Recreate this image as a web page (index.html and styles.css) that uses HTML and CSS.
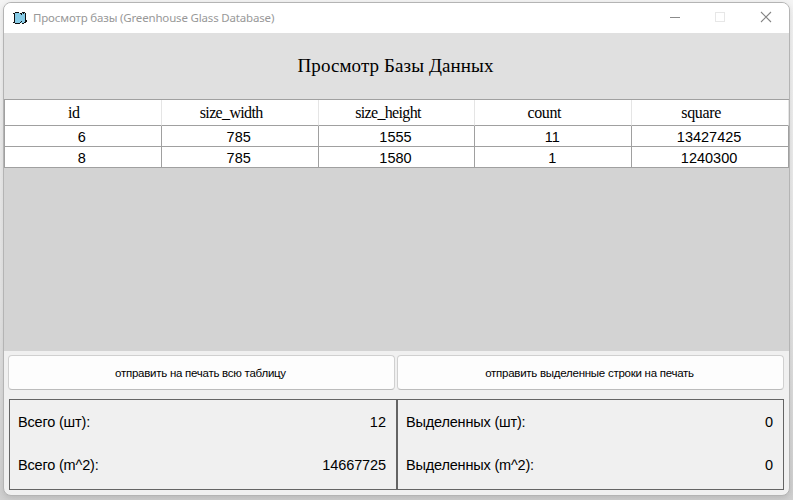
FILE: index.html
```html
<!DOCTYPE html>
<html lang="ru">
<head>
<meta charset="utf-8">
<title>Просмотр базы (Greenhouse Glass Database)</title>
<link rel="stylesheet" href="styles.css">
</head>
<body>
<div class="window">
  <header class="titlebar">
    <svg class="app-icon" width="14" height="14" viewBox="0 0 14 14" shape-rendering="crispEdges">
      <path fill="#86cbe6" d="M2 2h10v10H2z"/>
      <path fill="#111" d="M0 2h2v1H0zM1 3h1v8H1zM0 11h2v1H0zM2 1h4v1H2zM7 2h2v1H7zM9 1h3v1H9zM12 2h1v7h-1zM12 9h2v2h-2zM11 11h2v1h-2zM2 12h3v1H2zM5 12h2v1H5zM7 11h1v1H7zM8 10h1v1H8zM9 12h2v1H9zM8 3h1v1H8zM10 2h1v1h-1z"/>
    </svg>
    <span class="title">Просмотр базы (Greenhouse Glass Database)</span>
    <div class="controls">
      <svg width="46" height="30" viewBox="0 0 46 30"><path d="M18 14.5h10" stroke="#8b8b8b"/></svg>
      <svg width="46" height="30" viewBox="0 0 46 30"><rect x="17.5" y="9.5" width="9" height="9" fill="none" stroke="#e7e7e7"/></svg>
      <svg width="46" height="30" viewBox="0 0 46 30"><path d="M17 9l10 10M27 9l-10 10" stroke="#858585" stroke-width="1.1"/></svg>
    </div>
  </header>
  <div class="heading"><h1>Просмотр Базы Данных</h1></div>
  <main class="grid-area">
    <table>
      <thead><tr><th>id</th><th class="long">size_width</th><th class="long">size_height</th><th>count</th><th>square</th></tr></thead>
      <tbody>
        <tr><td>6</td><td>785</td><td>1555</td><td>11</td><td>13427425</td></tr>
        <tr><td>8</td><td>785</td><td>1580</td><td>1</td><td>1240300</td></tr>
      </tbody>
    </table>
  </main>
  <div class="actions">
    <button type="button">отправить на печать всю таблицу</button>
    <button type="button">отправить выделенные строки на печать</button>
  </div>
  <div class="totals">
    <section class="panel">
      <div class="row"><span class="label">Всего (шт):</span><span>12</span></div>
      <div class="row"><span class="label">Всего (m^2):</span><span class="sum">14667725</span></div>
    </section>
    <section class="panel">
      <div class="row"><span class="label">Выделенных (шт):</span><span>0</span></div>
      <div class="row"><span class="label">Выделенных (m^2):</span><span>0</span></div>
    </section>
  </div>
</div>
</body>
</html>
```
FILE: styles.css
```css
* { box-sizing: border-box; }
html, body { height: 100%; }
body {
  margin: 0;
  padding: 2px 3px 4px;
  background: linear-gradient(#f4f4f4, #e6e6e6 60%, #d0d0d0);
  overflow: hidden;
}
.window {
  width: 787px;
  height: 494px;
  border: 1px solid #b4b4b4;
  border-radius: 8px;
  background: #f0f0f0;
  overflow: hidden;
  display: flex;
  flex-direction: column;
  box-shadow: 0 2px 6px rgba(0, 0, 0, .12);
}
.titlebar {
  height: 30px;
  flex: none;
  display: flex;
  align-items: center;
  background: #fff;
  padding-left: 9px;
}
.app-icon { margin-top: -1px; }
.title {
  font: 11.5px/16px "Noto Sans", sans-serif;
  color: #989898;
  margin-left: 6px;
  letter-spacing: -.17px;
  white-space: nowrap;
}
.controls { margin: 0 -1px 0 auto; display: flex; }
.heading {
  height: 66px;
  flex: none;
  display: flex;
  align-items: center;
  justify-content: center;
  background: #e0e0e0;
  padding-right: 2px;
}
h1 {
  margin: 0;
  font: 19px/22px "Liberation Serif", serif;
  letter-spacing: .1px;
  color: #000;
}
.grid-area { height: 252px; flex: none; background: #d3d3d3; }
table {
  width: 785px;
  border-collapse: separate;
  border-spacing: 0;
  table-layout: fixed;
  border-top: 1px solid #a0a0a0;
  border-left: 1px solid #a0a0a0;
  background: #fff;
}
th, td { padding: 0; text-align: center; }
th {
  height: 26px;
  font: 16px/18px "Liberation Serif", serif;
  letter-spacing: -.35px;
  border-bottom: 1px solid #a0a0a0;
  border-right: 1px solid #e5e5e5;
  padding: 1px 18px 0 0;
}
th.long { letter-spacing: -.65px; padding-right: 17px; }
td {
  height: 21px;
  font: 14.5px/18px "Liberation Sans", sans-serif;
  border-bottom: 1px solid #a0a0a0;
  border-right: 1px solid #a0a0a0;
  padding: 2px 2px 0 0;
}
.actions { display: flex; gap: 2px; padding: 4px 4px 0; }
button {
  width: 387px;
  height: 35px;
  padding: 1px 2px 0 0;
  border: 1px solid #d0d0d0;
  border-bottom-color: #bcbcbc;
  border-radius: 4px;
  background: #fdfdfd;
  font: 11.5px/14px "Liberation Sans", sans-serif;
  letter-spacing: -.26px;
  color: #000;
}
.totals { display: flex; margin: 9px 5px 0; }
.panel {
  width: 388px;
  height: 91px;
  border: 1px solid #646464;
  padding: 0 10px 0 8px;
}
.panel + .panel { width: 387px; }
.row {
  height: 43px;
  display: flex;
  align-items: center;
  justify-content: space-between;
  font: 14.5px/18px "Liberation Sans", sans-serif;
  color: #000;
}
.label { letter-spacing: -.18px; }
.sum { letter-spacing: -.1px; }
```
